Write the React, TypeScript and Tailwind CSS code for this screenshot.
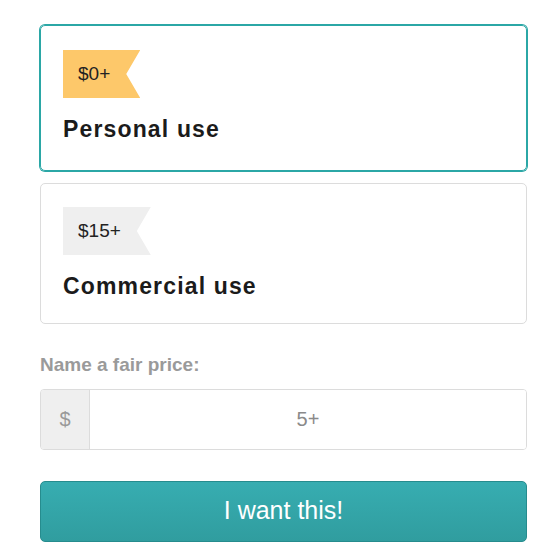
import { useState } from 'react'

const TIERS = [
  { price: '$0+', name: 'Personal use', badge: 'bg-[#fdc86a]' },
  { price: '$15+', name: 'Commercial use', badge: 'bg-[#efefef]' },
]

function Ribbon({ price, color }: { price: string; color: string }) {
  return (
    <div
      className={`inline-flex h-12 items-center pl-[15px] pr-[30px] text-[19px] text-[#222] ${color}`}
      style={{ clipPath: 'polygon(0 0, 100% 0, calc(100% - 14px) 50%, 100% 100%, 0 100%)' }}
    >
      {price}
    </div>
  )
}

export default function App() {
  const [selected, setSelected] = useState(0)

  return (
    <div className="min-h-[560px] bg-white pl-10 pr-[33px] pt-[25px] font-['Liberation_Sans',Arial,sans-serif]">
      <div className="flex flex-col gap-[12px]">
        {TIERS.map((t, i) => (
          <button
            key={t.name}
            type="button"
            onClick={() => setSelected(i)}
            className={`flex flex-col items-start rounded-[5px] border px-[22px] text-left ${
              selected === i
                ? 'border-[#2ba7a6] pt-[24px] pb-[28px] ring-1 ring-[#2ba7a6]'
                : 'border-[#dcdcdc] pt-[23px] pb-[24px]'
            }`}
          >
            <Ribbon price={t.price} color={t.badge} />
            <span className="mt-[18px] text-[23px] font-bold leading-[26px] tracking-[0.05em] text-[#1b1b1b]">{t.name}</span>
          </button>
        ))}
      </div>

      <div className="mt-[27px] text-[19px] font-bold text-[#9a9a9a]">Name a fair price:</div>

      <div className="mt-[9px] flex h-[61px] overflow-hidden rounded-[4px] border border-[#dcdcdc]">
        <div className="flex w-[49px] items-center justify-center border-r border-[#dcdcdc] bg-[#efefef] text-[20px] text-[#999]">$</div>
        <input
          className="flex-1 bg-white text-center text-[20px] text-[#666] outline-none placeholder:text-[#8a8a8a]"
          placeholder="5+"
        />
      </div>

      <button
        type="button"
        className="mt-[31px] h-[61px] w-full rounded-[5px] border border-[#268c8e] bg-gradient-to-b from-[#37adb1] to-[#309d9f] text-[25px] text-white"
      >
        I want this!
      </button>
    </div>
  )
}
